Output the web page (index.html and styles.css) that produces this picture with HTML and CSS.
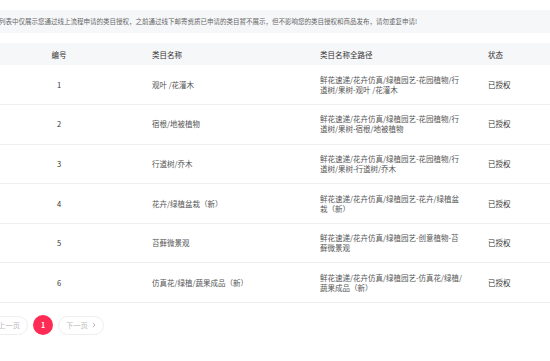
FILE: index.html
```html
<!DOCTYPE html>
<html lang="zh-CN">
<head>
<meta charset="utf-8">
<link rel="stylesheet" href="styles.css">
</head>
<body>
<div class="page">
  <div class="notice">列表中仅展示您通过线上流程申请的类目授权，之前通过线下邮寄资质已申请的类目暂不展示，但不影响您的类目授权和商品发布，请勿重复申请!</div>
  <table class="grid">
    <colgroup>
      <col class="c-no"><col class="c-name"><col class="c-path"><col class="c-status">
    </colgroup>
    <thead>
      <tr><th class="no">编号</th><th class="name">类目名称</th><th class="path">类目名称全路径</th><th class="status">状态</th></tr>
    </thead>
    <tbody>
      <tr><td class="no">1</td><td class="name">观叶 /花灌木</td><td class="path">鲜花速递/花卉仿真/绿植园艺-花园植物/行道树/果树-观叶 /花灌木</td><td class="status">已授权</td></tr>
      <tr><td class="no">2</td><td class="name">宿根/地被植物</td><td class="path">鲜花速递/花卉仿真/绿植园艺-花园植物/行道树/果树-宿根/地被植物</td><td class="status">已授权</td></tr>
      <tr><td class="no">3</td><td class="name">行道树/乔木</td><td class="path">鲜花速递/花卉仿真/绿植园艺-花园植物/行道树/果树-行道树/乔木</td><td class="status">已授权</td></tr>
      <tr><td class="no">4</td><td class="name">花卉/绿植盆栽（新）</td><td class="path">鲜花速递/花卉仿真/绿植园艺-花卉/绿植盆栽（新）</td><td class="status">已授权</td></tr>
      <tr><td class="no">5</td><td class="name">苔藓微景观</td><td class="path">鲜花速递/花卉仿真/绿植园艺-创意植物-苔藓微景观</td><td class="status">已授权</td></tr>
      <tr><td class="no">6</td><td class="name">仿真花/绿植/蔬果成品（新）</td><td class="path">鲜花速递/花卉仿真/绿植园艺-仿真花/绿植/蔬果成品（新）</td><td class="status">已授权</td></tr>
    </tbody>
  </table>
  <div class="pager">
    <span class="pbtn prev"><svg class="chev" viewBox="0 0 4 6" width="4" height="6"><path d="M3 0.8 L1 3 L3 5.2" fill="none" stroke="#c8c8c8" stroke-width="0.9"/></svg>上一页</span>
    <span class="pnum">1</span>
    <span class="pbtn next">下一页<svg class="chev" viewBox="0 0 4 6" width="4" height="6"><path d="M1 0.8 L3 3 L1 5.2" fill="none" stroke="#b0b0b0" stroke-width="0.9"/></svg></span>
  </div>
</div>
</body>
</html>
```

FILE: styles.css
```css
html, body {
  margin: 0;
  padding: 0;
  background: #ffffff;
}
body {
  font-family: "Noto Sans CJK SC", "Noto Sans", sans-serif;
  color: #555;
  overflow: hidden;
}
.page {
  width: 550px;
  padding-top: 10px;
}
.notice {
  height: 23px;
  line-height: 23px;
  background: #f6f7f9;
  font-size: 6.5px;
  color: #666;
  white-space: nowrap;
  margin-left: -1px;
}
.grid {
  margin-top: 10px;
  width: 550px;
  table-layout: fixed;
  border-collapse: collapse;
  font-size: 7.5px;
}
.c-no { width: 118px; }
.c-name { width: 184px; }
.c-path { width: 170px; }
.c-status { width: 78px; }
.grid th {
  height: 22px;
  background: #f6f7f9;
  font-weight: normal;
  color: #333;
  text-align: left;
  padding: 0;
}
.grid td {
  height: 39.6px;
  padding: 0;
  border-bottom: 1px solid #eeeeee;
  line-height: 10px;
  color: #555;
  box-sizing: border-box;
}
.grid .no { text-align: center; color: #333; }
.grid .name { padding-left: 34px; }
.grid .path { padding-left: 18px; padding-right: 6px; }
.grid .status { padding-left: 16px; color: #333; }
.pager {
  margin-top: 12px;
  display: flex;
  align-items: center;
  gap: 5px;
}
.pbtn {
  flex: none;
  height: 19px;
  box-sizing: border-box;
  border: 1px solid #eeeeee;
  border-radius: 10px;
  display: flex;
  align-items: center;
  font-size: 7.3px;
  color: #bbbbbb;
  white-space: nowrap;
}
.prev {
  margin-left: -18px;
  width: 46px;
  padding: 0 7px 0 0;
  justify-content: flex-end;
  gap: 4px;
}
.next {
  width: 46px;
  padding: 0 0 0 7px;
  gap: 4px;
}
.pnum {
  flex: none;
  width: 20px;
  height: 20px;
  border-radius: 50%;
  background: #fe2c55;
  color: #fff;
  font-size: 7px;
  font-weight: bold;
  display: flex;
  align-items: center;
  justify-content: center;
}
.chev { display: block; }
```
